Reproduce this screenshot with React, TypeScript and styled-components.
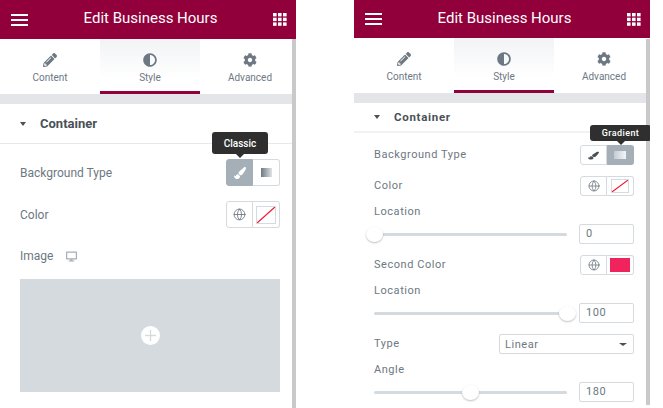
import React from 'react';
import styled, { createGlobalStyle } from 'styled-components';
import { FaPencilAlt, FaAdjust, FaCog, FaPaintBrush, FaDesktop } from 'react-icons/fa';
import { Globe } from 'lucide-react';

const GlobalStyle = createGlobalStyle`
  html, body {
    margin: 0;
    padding: 0;
    background: #fff;
  }
  body {
    font-family: Roboto, "Liberation Sans", sans-serif;
    color: #6d7882;
  }
`;

const Page = styled.div`
  display: flex;
  gap: 58px;
  width: 663px;
  height: 408px;
  overflow: hidden;
`;

const Panel = styled.div`
  position: relative;
  width: 296px;
  height: 408px;
  overflow: hidden;
  flex: none;
`;

const PanelInner = styled.div`
  width: 300px;
`;

const Scrollbar = styled.div<{ $compact?: boolean }>`
  position: absolute;
  right: 0;
  top: 39px;
  bottom: ${({ $compact }) => ($compact ? '3px' : '0')};
  width: 4px;
  background: #c9c9c9;
`;

const Header = styled.header<{ $compact?: boolean }>`
  display: flex;
  align-items: center;
  justify-content: space-between;
  height: ${({ $compact }) => ($compact ? '38px' : '39px')};
  padding: 0 13px 0 11px;
  box-sizing: border-box;
  background: #92003b;
  color: #fff;
`;

const HeaderTitle = styled.div`
  font-size: 15px;
  font-weight: 400;
  margin-bottom: 3px;
`;

const Tabs = styled.nav`
  display: flex;
  height: 55px;
`;

const Tab = styled.div<{ $active?: boolean }>`
  width: 100px;
  box-sizing: border-box;
  display: flex;
  flex-direction: column;
  align-items: center;
  padding-top: 14px;
  font-size: 10px;
  color: #6d7882;
  background: ${({ $active }) => ($active ? 'linear-gradient(#f1f3f5, #fff 75%)' : '#fff')};
  border-bottom: 3px solid ${({ $active }) => ($active ? '#92003b' : 'transparent')};

  svg {
    width: 14px;
    height: 14px;
    margin-bottom: 5px;
  }
`;

const Strip = styled.div`
  height: 10px;
  background: #e3e5e8;
`;

const SectionHead = styled.div<{ $compact?: boolean }>`
  display: flex;
  align-items: center;
  gap: 14px;
  padding-left: 20px;
  height: ${({ $compact }) => ($compact ? '28px' : '39px')};
  border-bottom: ${({ $compact }) => ($compact ? '2px solid #f1f2f3' : '1px solid #e6e9ec')};
  font-size: ${({ $compact }) => ($compact ? '11.5px' : '13px')};
  letter-spacing: ${({ $compact }) => ($compact ? '0.7px' : '0')};
  font-weight: 700;
  color: #495157;
`;

const Caret = styled.span`
  flex: none;
  width: 0;
  height: 0;
  border-left: 3.5px solid transparent;
  border-right: 3.5px solid transparent;
  border-top: 4px solid #495157;
`;

const Body = styled.div<{ $compact?: boolean }>`
  display: flex;
  flex-direction: column;
  padding: ${({ $compact }) => ($compact ? '1px 20px 0' : '0 20px')};
`;

const Field = styled.div<{ $compact?: boolean }>`
  display: flex;
  align-items: center;
  justify-content: space-between;
  margin-top: ${({ $compact }) => ($compact ? '11px' : '15px')};
`;

const Label = styled.span<{ $compact?: boolean }>`
  font-size: ${({ $compact }) => ($compact ? '11px' : '12px')};
  letter-spacing: ${({ $compact }) => ($compact ? '0.55px' : '0')};
  line-height: 14px;
`;

const LabelRow = styled.div`
  display: flex;
  margin-top: 9px;
  margin-bottom: 5px;
`;

const ImageLabelRow = styled.div`
  display: flex;
  align-items: center;
  gap: 13px;
  height: 16px;
  margin-top: 20px;

  svg {
    color: #a4afb7;
  }
`;

const ImageBox = styled.div`
  display: flex;
  align-items: center;
  justify-content: center;
  height: 113px;
  margin-top: 15px;
  background: #d5dadf;
`;

const PlusCircle = styled.div`
  width: 19px;
  height: 19px;
  border-radius: 50%;
  background: #fff;
  color: #d5dadf;
  display: flex;
  align-items: center;
  justify-content: center;
`;

const Switcher = styled.div`
  position: relative;
  display: flex;
  flex: none;
`;

const SwitchCell = styled.div<{ $compact?: boolean; $active?: boolean; $side: 'left' | 'right' }>`
  width: 27px;
  height: ${({ $compact }) => ($compact ? '20px' : '27px')};
  box-sizing: border-box;
  display: flex;
  align-items: center;
  justify-content: center;
  background: ${({ $active }) => ($active ? '#a4afb7' : '#fff')};
  color: ${({ $active }) => ($active ? '#fff' : '#495157')};
  border: 1px solid ${({ $active }) => ($active ? '#a4afb7' : '#d5dadf')};
  border-left-width: ${({ $side }) => ($side === 'left' ? '1px' : '0')};
  border-radius: ${({ $side }) => ($side === 'left' ? '3px 0 0 3px' : '0 3px 3px 0')};
`;

const GlobeSlot = styled.span`
  display: flex;
  color: #6d7882;
`;

const Swatch = styled.div<{ $color?: string; $compact?: boolean }>`
  flex: 1;
  align-self: stretch;
  margin: ${({ $compact, $color }) => ($color ? '2px 3px' : $compact ? '2px 4px' : '4px 3px 3px')};
  background: ${({ $color }) => $color || '#fff'};
  border: ${({ $color }) => ($color ? '0' : '1px solid #d5dadf')};
  box-sizing: border-box;
  display: flex;
`;

const Tooltip = styled.div<{ $compact?: boolean }>`
  position: absolute;
  z-index: 1;
  display: flex;
  align-items: center;
  justify-content: center;
  background: #2f2f2f;
  color: #fff;
  border-radius: 3px;
  font-weight: 500;
  top: ${({ $compact }) => ($compact ? '-20px' : '-27px')};
  left: ${({ $compact }) => ($compact ? '10px' : '-14px')};
  width: ${({ $compact }) => ($compact ? '61px' : '56px')};
  height: ${({ $compact }) => ($compact ? '16px' : '22px')};
  font-size: ${({ $compact }) => ($compact ? '9px' : '10px')};
  letter-spacing: ${({ $compact }) => ($compact ? '0.4px' : '0')};

  &::after {
    content: '';
    position: absolute;
    top: 100%;
    left: 50%;
    margin-left: -4px;
    border-left: 4px solid transparent;
    border-right: 4px solid transparent;
    border-top: 4px solid #2f2f2f;
  }
`;

const GradientGlyph = styled.span<{ $compact?: boolean }>`
  display: block;
  width: ${({ $compact }) => ($compact ? '12px' : '11px')};
  height: ${({ $compact }) => ($compact ? '8px' : '9px')};
  background: ${({ $compact }) =>
    $compact ? 'linear-gradient(90deg, #c4ccd2, #f4f5f6)' : 'linear-gradient(90deg, #6d7882, #dfe3e6)'};
`;

const SliderRow = styled.div`
  display: flex;
  align-items: center;
  justify-content: space-between;
`;

const Track = styled.div`
  position: relative;
  width: 193px;
  height: 3px;
  border-radius: 2px;
  background: #d5dadf;
`;

const Handle = styled.span`
  position: absolute;
  top: 50%;
  width: 17px;
  height: 15px;
  margin: -7px 0 0 -8.5px;
  border-radius: 50%;
  background: #fff;
  box-shadow: 0 1px 2px rgba(0, 0, 0, 0.25);
`;

const NumberBox = styled.div`
  width: 55px;
  height: 20px;
  box-sizing: border-box;
  border: 1px solid #d5dadf;
  border-radius: 2px;
  padding-left: 6px;
  font-size: 11px;
  letter-spacing: 0.55px;
  line-height: 18px;
`;

const SelectBox = styled.div`
  display: flex;
  align-items: center;
  justify-content: space-between;
  width: 135px;
  height: 20px;
  box-sizing: border-box;
  border: 1px solid #d5dadf;
  border-radius: 2px;
  padding: 0 6px 0 5px;
  font-size: 11px;
  letter-spacing: 0.55px;
`;

const SelectCaret = styled.span`
  width: 0;
  height: 0;
  border-left: 4px solid transparent;
  border-right: 4px solid transparent;
  border-top: 3px solid #495157;
`;

const Hamburger = () => (
  <svg width="17" height="12" viewBox="0 0 17 12" fill="#fff">
    <rect y="0" width="17" height="2" />
    <rect y="5" width="17" height="2" />
    <rect y="10" width="17" height="2" />
  </svg>
);

const GridIcon = () => (
  <svg width="14" height="13" viewBox="0 0 14 13" fill="#fff">
    {[0, 5, 10].map((x) =>
      [0, 4.7, 9.4].map((y) => <rect key={`${x}-${y}`} x={x} y={y} width="3.6" height="3.4" />)
    )}
  </svg>
);

const BrushIcon = ({ compact }: { compact?: boolean }) => (
  <FaPaintBrush size={compact ? 11 : 12} style={{ transform: compact ? 'scaleY(0.75)' : undefined }} />
);

const NoColor = () => (
  <svg width="100%" height="100%" viewBox="0 0 20 20" preserveAspectRatio="none">
    <line x1="0" y1="20" x2="20" y2="0" stroke="#f5102c" strokeWidth="1.5" />
  </svg>
);

const PanelHead: React.FC<{ compact?: boolean }> = ({ compact }) => (
  <>
    <Header $compact={compact}>
      <Hamburger />
      <HeaderTitle>Edit Business Hours</HeaderTitle>
      <GridIcon />
    </Header>
    <Tabs>
      <Tab>
        <FaPencilAlt />
        Content
      </Tab>
      <Tab $active>
        <FaAdjust />
        Style
      </Tab>
      <Tab>
        <FaCog />
        Advanced
      </Tab>
    </Tabs>
    <Strip />
    <SectionHead $compact={compact}>
      <Caret />
      Container
    </SectionHead>
  </>
);

const ColorControl: React.FC<{ compact?: boolean; color?: string }> = ({ compact, color }) => (
  <Switcher>
    <SwitchCell $compact={compact} $side="left">
      <GlobeSlot>
        <Globe size={compact ? 12 : 13} strokeWidth={1.6} />
      </GlobeSlot>
    </SwitchCell>
    <SwitchCell $compact={compact} $side="right">
      <Swatch $color={color} $compact={compact}>
        {!color && <NoColor />}
      </Swatch>
    </SwitchCell>
  </Switcher>
);

const Slider: React.FC<{ label: string; value: number; percent: number }> = ({ label, value, percent }) => (
  <>
    <LabelRow>
      <Label $compact>{label}</Label>
    </LabelRow>
    <SliderRow>
      <Track>
        <Handle style={{ left: `${percent}%` }} />
      </Track>
      <NumberBox>{value}</NumberBox>
    </SliderRow>
  </>
);

const ClassicPanel = () => (
  <Panel>
    <PanelInner>
      <PanelHead />
      <Body>
        <Field>
          <Label>Background Type</Label>
          <Switcher>
            <Tooltip>Classic</Tooltip>
            <SwitchCell $active $side="left">
              <BrushIcon />
            </SwitchCell>
            <SwitchCell $side="right">
              <GradientGlyph />
            </SwitchCell>
          </Switcher>
        </Field>
        <Field>
          <Label>Color</Label>
          <ColorControl />
        </Field>
        <ImageLabelRow>
          <Label>Image</Label>
          <FaDesktop size={11} />
        </ImageLabelRow>
        <ImageBox>
          <PlusCircle>
            <svg width="11" height="11" viewBox="0 0 11 11" fill="currentColor">
              <rect x="4.8" width="1.4" height="11" />
              <rect y="4.8" width="11" height="1.4" />
            </svg>
          </PlusCircle>
        </ImageBox>
      </Body>
    </PanelInner>
    <Scrollbar />
  </Panel>
);

const GradientPanel = () => (
  <Panel>
    <PanelInner>
      <PanelHead compact />
      <Body $compact>
        <Field $compact>
          <Label $compact>Background Type</Label>
          <Switcher>
            <Tooltip $compact>Gradient</Tooltip>
            <SwitchCell $compact $side="left">
              <BrushIcon compact />
            </SwitchCell>
            <SwitchCell $compact $active $side="right">
              <GradientGlyph $compact />
            </SwitchCell>
          </Switcher>
        </Field>
        <Field $compact>
          <Label $compact>Color</Label>
          <ColorControl compact />
        </Field>
        <Slider label="Location" value={0} percent={0} />
        <Field $compact>
          <Label $compact>Second Color</Label>
          <ColorControl compact color="#f0245c" />
        </Field>
        <Slider label="Location" value={100} percent={100} />
        <Field $compact>
          <Label $compact>Type</Label>
          <SelectBox>
            Linear
            <SelectCaret />
          </SelectBox>
        </Field>
        <Slider label="Angle" value={180} percent={50} />
      </Body>
    </PanelInner>
    <Scrollbar $compact />
  </Panel>
);

const App = () => (
  <>
    <GlobalStyle />
    <Page>
      <ClassicPanel />
      <GradientPanel />
    </Page>
  </>
);

export default App;
